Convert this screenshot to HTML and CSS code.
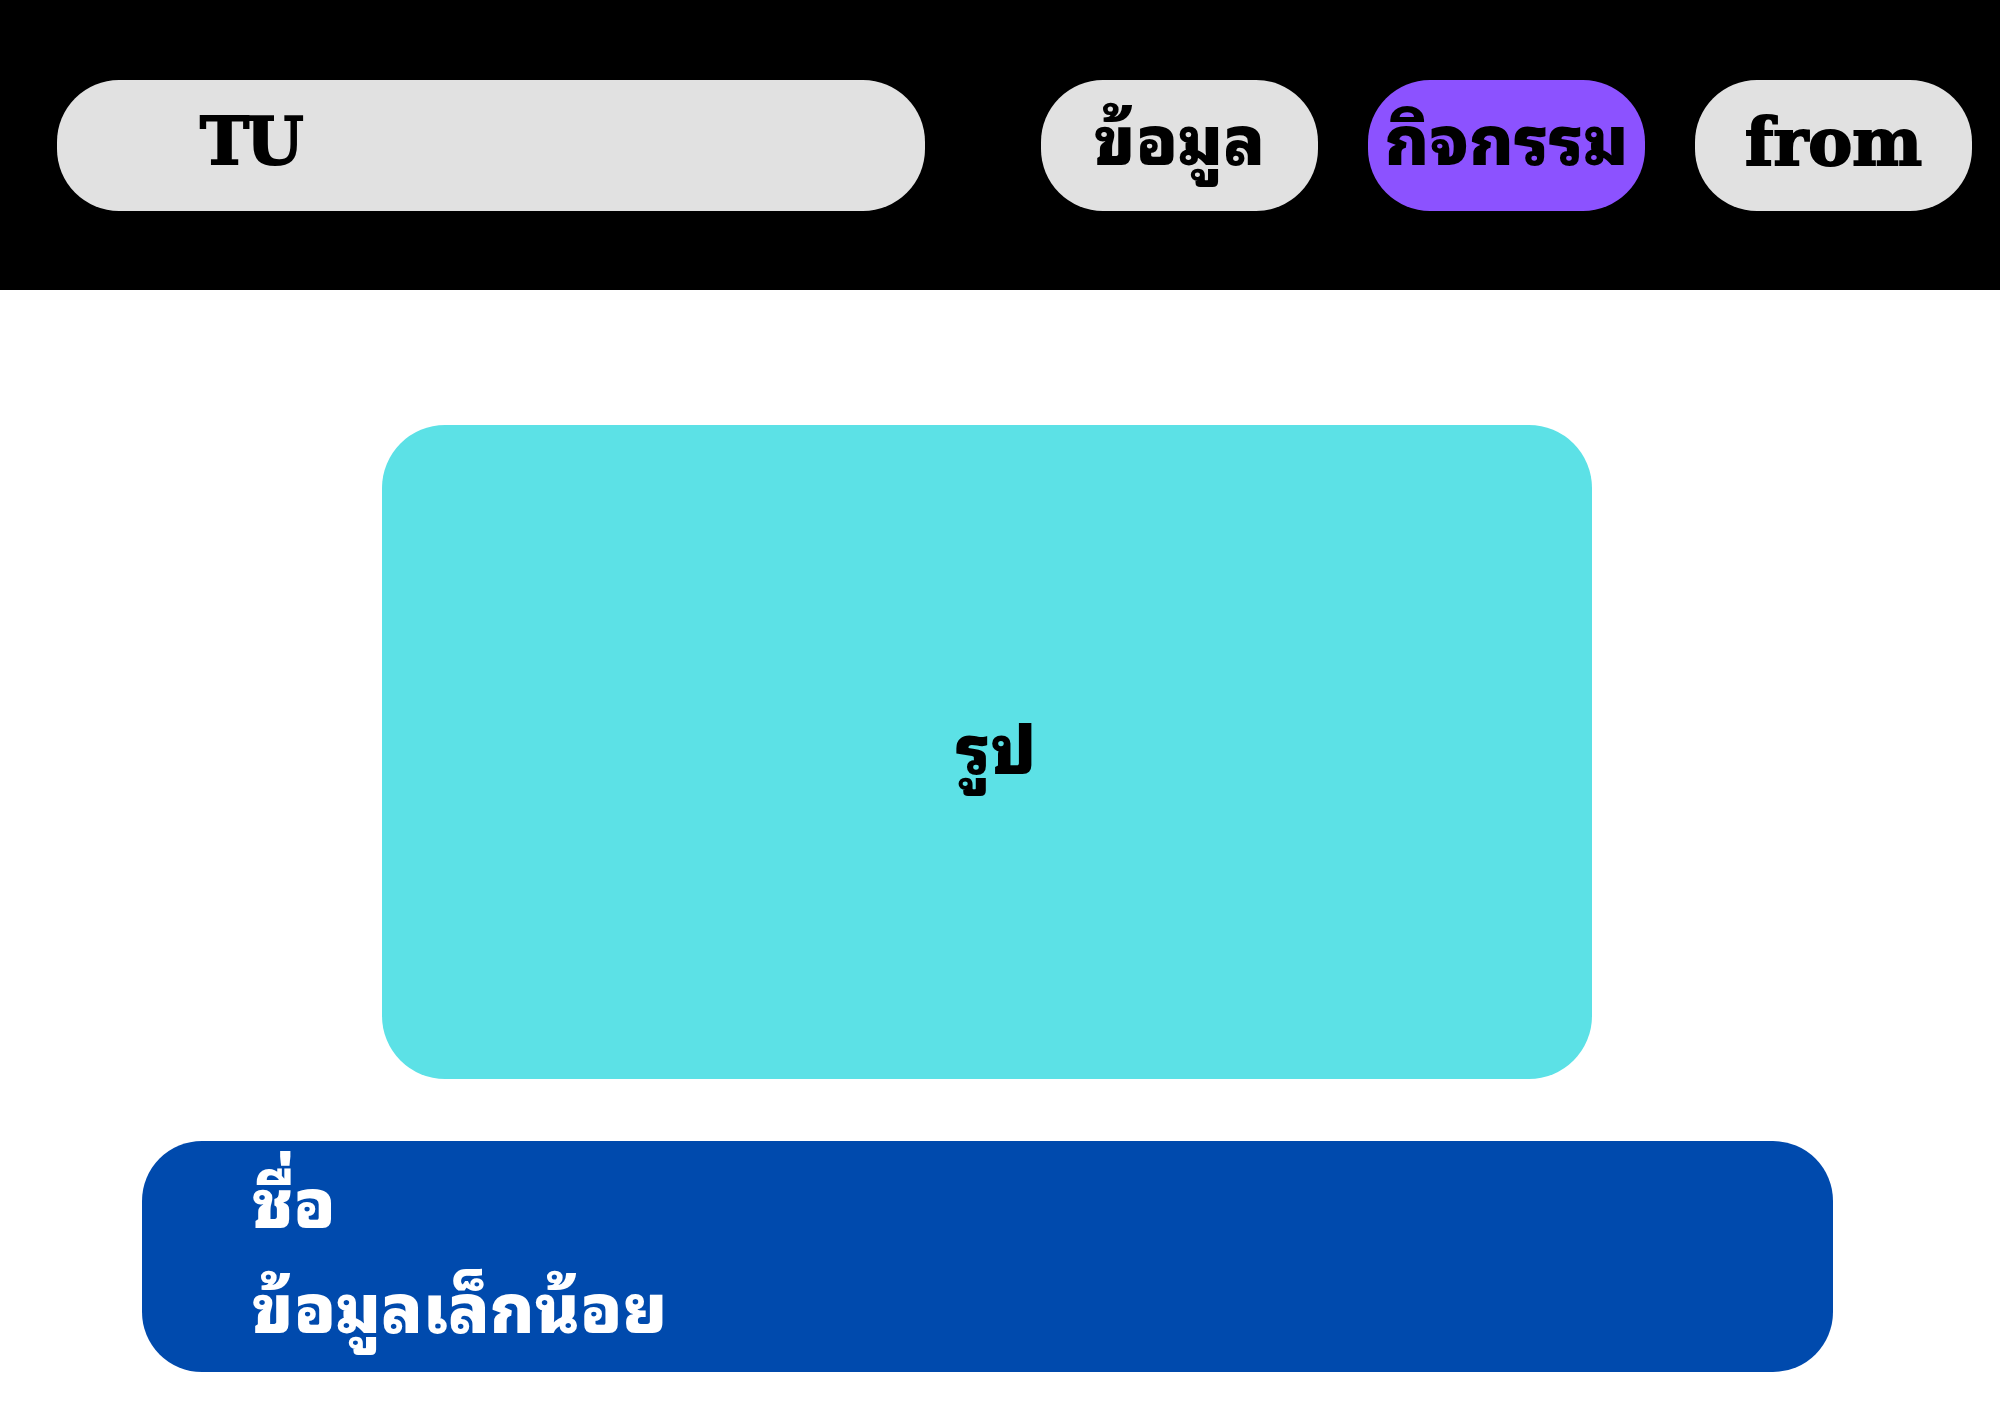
FILE: index.html
```html
<!DOCTYPE html>
<html lang="th">
<head>
<meta charset="utf-8">
<title>TU</title>
<link rel="stylesheet" href="styles.css">
</head>
<body>
<header class="topbar">
  <div class="pill pill-brand"><span class="brand">TU</span></div>
  <nav class="nav">
    <a class="pill pill-nav thai">ข้อมูล</a>
    <a class="pill pill-nav pill-active thai">กิจกรรม</a>
    <a class="pill pill-nav latin">from</a>
  </nav>
</header>
<main class="content">
  <div class="picture thai"><span class="picture-label">รูป</span></div>
  <div class="info thai">
    <div class="info-line">ชื่อ</div>
    <div class="info-line">ข้อมูลเล็กน้อย</div>
  </div>
</main>
</body>
</html>
```
FILE: styles.css
```css
html, body {
  margin: 0;
  padding: 0;
  background: #ffffff;
}
body {
  width: 2000px;
  height: 1414px;
  overflow: hidden;
}
.thai {
  font-family: "Noto Sans Thai Looped", "Noto Sans Thai", "Noto Sans", sans-serif;
  font-weight: 900;
}
.latin, .brand {
  font-family: "DejaVu Serif", serif;
  font-weight: 700;
  -webkit-text-stroke: 2px #000000;
}
.topbar {
  height: 290px;
  background: #000000;
  display: flex;
  align-items: center;
  padding-left: 57px;
  box-sizing: border-box;
}
.pill {
  height: 131px;
  border-radius: 62px;
  background: #e1e1e1;
  color: #000000;
  display: flex;
  align-items: center;
  box-sizing: border-box;
  text-decoration: none;
}
.pill-brand {
  width: 868px;
  padding-left: 143px;
}
.brand {
  font-size: 66px;
  line-height: 1;
  margin-top: -8px;
  letter-spacing: -3px;
}
.nav {
  display: flex;
  gap: 50px;
  margin-left: 116px;
}
.pill-nav {
  width: 277px;
  justify-content: center;
  font-size: 67px;
  line-height: 1;
}
.pill-nav.thai {
  padding-bottom: 22px;
}
.pill-nav.latin {
  font-size: 66px;
  padding-bottom: 6px;
}
.pill-active {
  background: #8c52ff;
}
.content {
  display: flex;
  flex-direction: column;
}
.picture {
  margin: 135px 0 0 382px;
  width: 1210px;
  height: 654px;
  border-radius: 63px;
  background: #5ce1e6;
  color: #000000;
  display: flex;
  align-items: center;
  justify-content: center;
  font-size: 67px;
}
.picture-label {
  margin: 0 0 18px 18px;
}
.info {
  margin: 62px 0 0 142px;
  width: 1691px;
  height: 231px;
  border-radius: 60px;
  background: #004aad;
  color: #ffffff;
  padding: 4px 0 0 110px;
  box-sizing: border-box;
  font-size: 67px;
}
.info-line {
  line-height: 105px;
}
```
